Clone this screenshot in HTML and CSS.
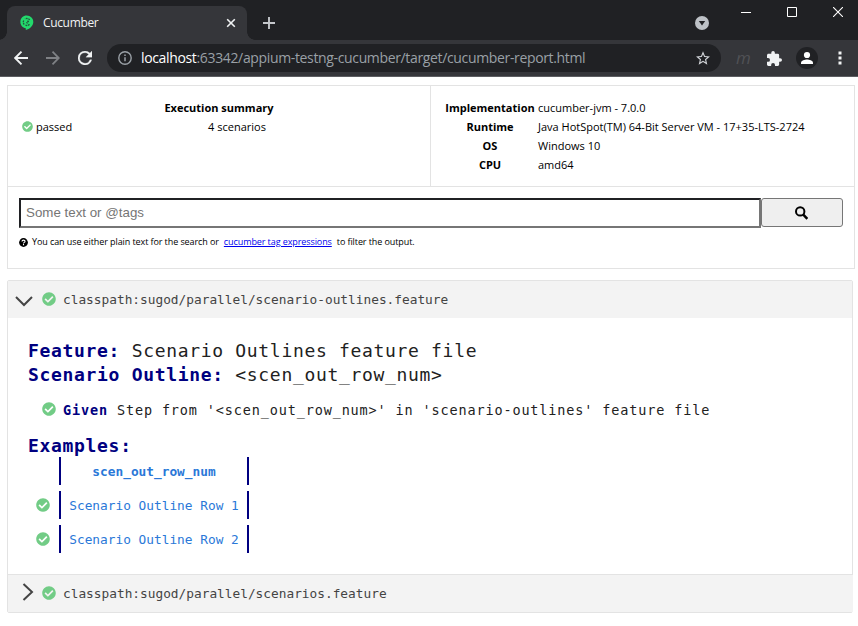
FILE: index.html
```html
<!DOCTYPE html>
<html lang="en">
<head>
<meta charset="utf-8">
<title>Cucumber</title>
<link rel="stylesheet" href="styles.css">
</head>
<body>
<svg class="defs" width="0" height="0" aria-hidden="true">
  <symbol id="check" viewBox="0 0 512 512"><path fill="currentColor" d="M504 256c0 136.967-111.033 248-248 248S8 392.967 8 256 119.033 8 256 8s248 111.033 248 248zM227.314 387.314l184-184c6.248-6.248 6.248-16.379 0-22.627l-22.627-22.627c-6.248-6.249-16.379-6.249-22.628 0L216 308.118l-70.059-70.059c-6.248-6.248-16.379-6.248-22.628 0l-22.627 22.627c-6.248 6.248-6.248 16.379 0 22.627l104 104c6.249 6.249 16.379 6.249 22.628.001z"/></symbol>
</svg>
<header class="browser">
  <div class="tabstrip">
    <div class="tab">
      <svg class="favicon" width="14" height="16" viewBox="0 0 14 16"><path fill="#23d96c" d="M6.700.6C3.100.6.4 3.300.4 6.900c0 3.300 2.300 5.900 5.400 6.300v1.800c3.700-.8 7.300-4 7.500-7.700C13.500 3.600 10.500.6 6.700.6z"/><g fill="none" stroke="#25583d" stroke-width="1.300"><path d="M9.800 4.800C8.500 3.400 6.500 3 5 4M3.700 5.500C3 7 3.300 8.400 4.200 9.500M5.500 10.200c1.400.6 3 .2 4-1M9 6.500 7 6.200M6.200 7.500l1.700.8" stroke-dasharray="1.800 .7"/></g></svg>
      <span class="tab-title">Cucumber</span>
      <svg class="tab-close" width="10" height="10" viewBox="0 0 10 10"><path d="M1.200 1.200l7.600 7.600M8.800 1.200l-7.600 7.600" stroke="#f1f3f4" stroke-width="1.600"/></svg>
    </div>
    <svg class="new-tab" width="12" height="12" viewBox="0 0 12 12"><path d="M6 0v12M0 6h12" stroke="#c4c7cb" stroke-width="1.900"/></svg>
    <svg class="tab-search" width="14" height="14" viewBox="0 0 14 14"><circle cx="7" cy="7" r="7" fill="#bdc1c6"/><path d="M3.800 5h6.400L7 9.500z" fill="#202124"/></svg>
    <div class="window-buttons">
      <svg width="10" height="10" viewBox="0 0 10 10"><path d="M0 5.500h10" stroke="#fff"/></svg>
      <svg width="10" height="10" viewBox="0 0 10 10"><path d="M.5.5h9v9h-9z" fill="none" stroke="#fff"/></svg>
      <svg width="10" height="10" viewBox="0 0 10 10"><path d="M0 0l10 10M10 0L0 10" stroke="#fff" stroke-width="1.100"/></svg>
    </div>
  </div>
  <div class="toolbar">
    <svg class="back" width="14" height="14" viewBox="0 0 14 14"><path d="M14 7H1.500M7.500 .7 1.200 7l6.300 6.300" fill="none" stroke="#f1f3f4" stroke-width="1.900"/></svg>
    <svg class="forward" width="14" height="14" viewBox="0 0 14 14"><path d="M0 7h12.500M6.500.7 12.800 7l-6.300 6.300" fill="none" stroke="#7f8185" stroke-width="1.800"/></svg>
    <svg class="reload" width="14" height="14" viewBox="4 4 16 16"><path fill="#f1f3f4" stroke="#f1f3f4" stroke-width=".3" d="M17.650 6.350A7.960 7.960 0 0 0 12 4a8 8 0 1 0 7.730 10h-2.080A6 6 0 1 1 12 6c1.660 0 3.140.69 4.220 1.780L13 11h7V4l-2.350 2.350z"/></svg>
    <div class="omnibox">
      <svg width="14" height="14" viewBox="0 0 14 14"><circle cx="7" cy="7" r="6.200" fill="none" stroke="#9aa0a6" stroke-width="1.400"/><path d="M7 6.200v4M7 3.500V5" stroke="#9aa0a6" stroke-width="1.500"/></svg>
      <span class="url"><span class="host">localhost</span>:63342/appium-testng-cucumber/target/cucumber-report.html</span>
      <svg class="star" width="14" height="14" viewBox="2 2 20 19"><path fill="#d0d3d7" d="M22 9.240l-7.190-.62L12 2 9.190 8.630 2 9.240l5.460 4.730L5.820 21 12 17.270 18.180 21l-1.630-7.030L22 9.240zM12 15.400l-3.760 2.270 1-4.280-3.320-2.880 4.380-.38L12 6.100l1.710 4.040 4.380.38-3.320 2.880 1 4.280L12 15.400z"/></svg>
    </div>
    <span class="extension">m</span>
    <svg class="puzzle" width="15" height="15" viewBox="2 1 21 21"><path fill="#f1f3f4" d="M20.500 11H19V7a2 2 0 0 0-2-2h-4V3.500a2.500 2.500 0 0 0-5 0V5H4c-1.100 0-1.990.9-1.990 2v3.800H3.500a2.700 2.700 0 0 1 0 5.400H2V20c0 1.100.9 2 2 2h3.800v-1.500a2.700 2.700 0 0 1 5.400 0V22H17a2 2 0 0 0 2-2v-4h1.500a2.500 2.500 0 0 0 0-5z"/></svg>
    <svg class="profile" width="22" height="22" viewBox="0 0 22 22"><circle cx="11" cy="11" r="11" fill="#202124"/><circle cx="11" cy="8" r="3.100" fill="#fff"/><path d="M5 17v-1.500c0-2 4-3.100 6-3.100s6 1.100 6 3.100V17z" fill="#fff"/></svg>
    <svg class="menu" width="4" height="14" viewBox="0 0 4 14"><path d="M.5.500h3v3h-3zM.5 5.500h3v3h-3zM.5 10.500h3v3h-3z" fill="#f1f3f4"/></svg>
  </div>
</header>
<main>
  <section class="summary">
    <div class="stats">
      <div class="passed"><svg class="ok small"><use href="#check"/></svg><span>passed</span></div>
      <div class="execution"><b>Execution summary</b><span class="count">4 scenarios</span></div>
      <dl class="meta">
        <dt>Implementation</dt><dd>cucumber-jvm - 7.0.0</dd>
        <dt>Runtime</dt><dd>Java HotSpot(TM) 64-Bit Server VM - 17+35-LTS-2724</dd>
        <dt>OS</dt><dd>Windows 10</dd>
        <dt>CPU</dt><dd>amd64</dd>
      </dl>
    </div>
    <form class="search">
      <input type="text" placeholder="Some text or @tags" aria-label="Search">
      <button type="button" aria-label="Search"><svg width="13" height="14" viewBox="0 0 13 14"><circle cx="5.200" cy="5.400" r="4.200" fill="none" stroke="#000" stroke-width="2"/><path d="M8.300 8.700l4 4.200" stroke="#000" stroke-width="2.500"/></svg></button>
    </form>
    <p class="hint">
      <svg width="9" height="9" viewBox="0 0 9 9"><circle cx="4.500" cy="4.500" r="4.400"/><path d="M3 3.500C3 1.700 6 1.700 6 3.400c0 1-1.500 1-1.500 2M4.500 6.100v1.200" fill="none" stroke="#fff" stroke-width="1.100"/></svg>
      <span class="hint-lead">You can use either plain text for the search or</span>
      <a href="#">cucumber tag expressions</a>
      <span>to filter the output.</span>
    </p>
  </section>
  <section class="accordion">
    <div class="item-head open">
      <svg class="chevron" width="18" height="11" viewBox="0 0 18 11"><path d="M1 1l8 8 8-8" fill="none" stroke="#444" stroke-width="2"/></svg>
      <svg class="ok"><use href="#check"/></svg>
      <span>classpath:sugod/parallel/scenario-outlines.feature</span>
    </div>
    <div class="feature">
      <h1><b>Feature:</b> Scenario Outlines feature file</h1>
      <h2><b>Scenario Outline:</b> &lt;scen_out_row_num&gt;</h2>
      <div class="step"><svg class="ok"><use href="#check"/></svg><span><b>Given</b> Step from '&lt;scen_out_row_num&gt;' in 'scenario-outlines' feature file</span></div>
      <h2 class="examples"><b>Examples:</b></h2>
      <div class="table">
        <div class="row"><i></i><b class="cell">scen_out_row_num</b></div>
        <div class="row"><svg class="ok"><use href="#check"/></svg><span class="cell">Scenario Outline Row 1</span></div>
        <div class="row"><svg class="ok"><use href="#check"/></svg><span class="cell">Scenario Outline Row 2</span></div>
      </div>
    </div>
    <div class="item-head closed">
      <svg class="chevron" width="12" height="18" viewBox="0 0 12 18"><path d="M1.500 1l8.500 8-8.500 8" fill="none" stroke="#444" stroke-width="2"/></svg>
      <svg class="ok"><use href="#check"/></svg>
      <span>classpath:sugod/parallel/scenarios.feature</span>
    </div>
  </section>
</main>
</body>
</html>
```
FILE: styles.css
```css
* { box-sizing: border-box; }
body { margin: 0; background: #fff; color: #000; font-family: "Open Sans", sans-serif; font-size: 11px; white-space: nowrap; overflow: hidden; }
svg { display: block; flex: none; }
.defs { position: absolute; }

.browser { height: 77px; background: #35363a; border-bottom: 1px solid #5c5d61; }
.tabstrip { height: 40px; background: #202124; display: flex; }
.tab { position: relative; width: 240px; height: 34px; margin: 6px 0 0 7px; border-radius: 8px 8px 0 0; background: #35363a; display: flex; align-items: center; padding: 0 11px 0 13px; }
.tab::before, .tab::after { content: ""; position: absolute; bottom: 0; width: 8px; height: 8px; }
.tab::before { left: -8px; background: radial-gradient(circle at 0 0, #202124 7.5px, #35363a 8px); }
.tab::after { right: -8px; background: radial-gradient(circle at 100% 0, #202124 7.5px, #35363a 8px); }
.tab-title { margin: 0 0 2px 9px; color: #f1f3f4; font: 12px "Open Sans", sans-serif; letter-spacing: -.35px; }
.tab-close { margin-left: auto; }
.new-tab { margin: 17px 0 0 16px; }
.tab-search { margin: 16px 0 0 420px; }
.window-buttons { display: flex; gap: 36px; margin: 7px 0 0 32px; }

.toolbar { height: 36px; display: flex; align-items: center; }
.back { margin-left: 14px; }
.forward { margin-left: 18px; }
.reload { margin-left: 18px; }
.omnibox { width: 614px; height: 28px; margin-left: 15px; padding: 0 11px; border-radius: 14px; background: #202124; display: flex; align-items: center; }
.url { margin-left: 9px; color: #9aa0a6; font: 14px/20px "Open Sans", sans-serif; letter-spacing: -.35px; }
.host { color: #fff; }
.star { margin-left: auto; }
.extension { width: 14px; margin-left: 15px; color: #505155; font: italic 17px/20px "Open Sans", sans-serif; }
.puzzle { margin-left: 17px; }
.profile { margin-left: 14px; }
.menu { margin-left: 20px; }

.summary { margin: 8px 3px 0 7px; height: 184px; border: 1px solid #e3e3e3; }
.stats { height: 101px; border-bottom: 1px solid #e3e3e3; display: flex; line-height: 19px; }
.passed { display: flex; align-items: center; gap: 3px; height: 19px; margin: 31px 0 0 14px; width: 142px; }
.execution { width: 110px; margin-top: 12px; display: flex; flex-direction: column; align-items: center; }
.count { padding-left: 36px; }
.meta { margin: 0 0 0 auto; width: 424px; border-left: 1px solid #e3e3e3; padding: 12px 0 0 14px; display: grid; grid-template-columns: 90px 1fr; grid-auto-rows: 19px; column-gap: 3px; }
.meta dt { font-weight: 700; text-align: center; }
.meta dd { margin: 0; }
.search { display: flex; margin: 11px 11px 0; height: 30px; }
.search input { width: 742px; height: 30px; margin: 0; padding: 0 5px 2px; border: 2px solid; border-color: #202124 #767676 #767676 #202124; border-radius: 0; font: 13.33px "Liberation Sans", sans-serif; }
.search input::placeholder { color: #757575; opacity: 1; }
.search button { width: 82px; height: 29px; padding: 0 1px 0 0; border: 1px solid #767676; border-radius: 3px; background: #efefef; display: flex; align-items: center; justify-content: center; }
.hint { display: flex; align-items: center; height: 14px; margin: 7px 0 0 11px; font-size: 9px; line-height: 14px; letter-spacing: -.09px; }
.hint-lead { margin-left: 4px; }
.hint a { margin: 0 5px; color: #0000ee; text-decoration: underline; }

.ok { width: 14px; height: 14px; color: #72cc86; }
.ok.small { width: 11px; height: 11px; }
.accordion { margin: 11px 5px 0 7px; height: 333px; border: 1px solid #e3e3e3; border-radius: 2px; font-family: "DejaVu Sans Mono", monospace; font-size: 12.8px; color: #212121; }
.item-head { display: flex; align-items: center; background: #f3f3f3; color: #444; }
.item-head .ok { margin: 0 7px 2px 0; }
.open { height: 37px; padding-left: 7px; }
.open .chevron { margin: 3px 9px 0 0; }
.closed { height: 38px; margin-right: -1px; padding-left: 14px; border-top: 1px solid #e3e3e3; }
.closed .chevron { margin: -3px 8px 0 0; }
.feature { height: 256px; padding: 21px 20px 0; }
h1, h2 { margin: 0; font-size: 18px; line-height: 24px; font-weight: 400; letter-spacing: .68px; }
h1 b, h2 b, .step b { color: navy; font-weight: 700; }
.step { display: flex; align-items: center; gap: 7px; height: 20px; margin: 13px 0 0 14px; font-size: 13.5px; letter-spacing: .86px; }
.step .ok { margin-bottom: 2px; }
.examples { margin-top: 14px; }
.table { width: 222px; color: #2a78d8; display: flex; flex-direction: column; gap: 6px; margin-top: -1px; }
.row { display: grid; grid-template-columns: 14px 190px; column-gap: 9px; align-items: center; height: 28px; padding-left: 8px; }
.cell { height: 28px; line-height: 30px; text-align: center; border: solid navy; border-width: 0 2px; }
```
